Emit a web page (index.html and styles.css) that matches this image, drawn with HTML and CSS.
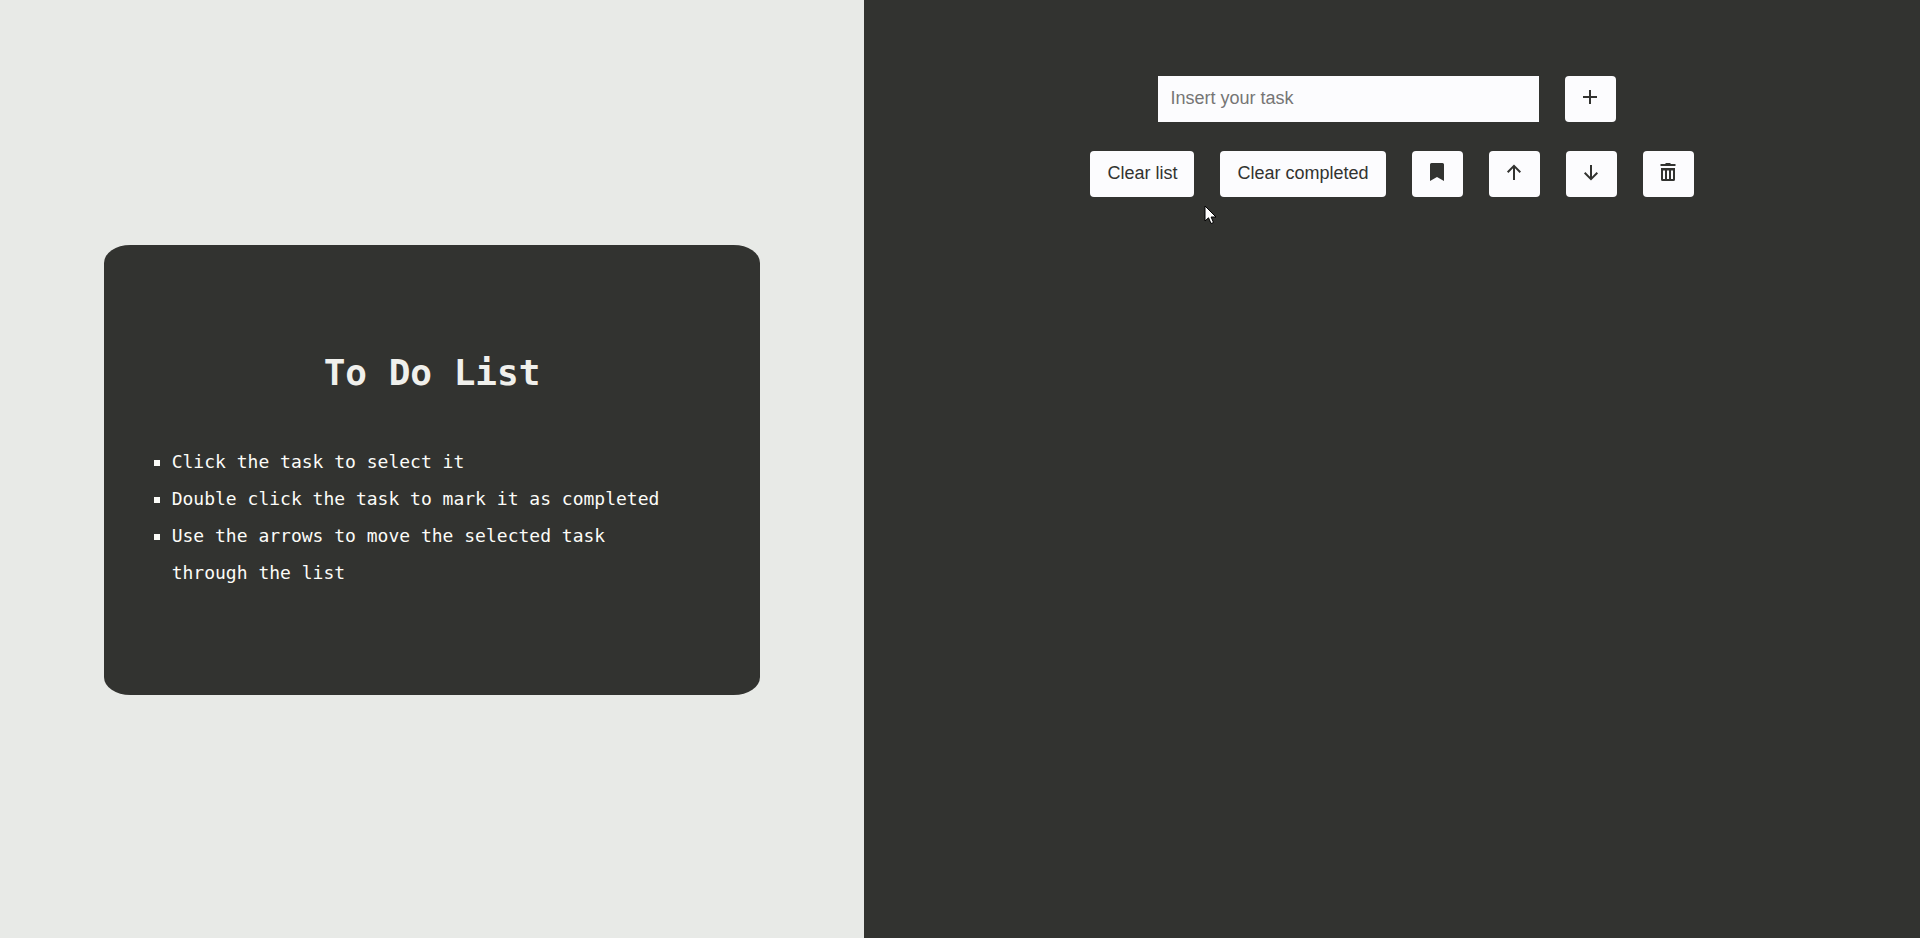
FILE: index.html
```html
<!DOCTYPE html>
<html lang="en">
<head>
<meta charset="utf-8">
<title>To Do List</title>
<link rel="stylesheet" href="styles.css">
</head>
<body>
<div class="page">
  <section class="intro">
    <div class="card">
      <h1 class="card-title">To Do List</h1>
      <ul class="tips">
        <li>Click the task to select it</li>
        <li>Double click the task to mark it as completed</li>
        <li>Use the arrows to move the selected task through the list</li>
      </ul>
    </div>
  </section>
  <main class="tasks">
    <form class="add-row">
      <input class="task-input" type="text" placeholder="Insert your task" aria-label="Insert your task">
      <button class="btn btn-icon btn-add" type="button" aria-label="Add task">
        <svg class="icon" viewBox="0 0 20 20"><path d="M10 3v14M3 10h14" fill="none" stroke="currentColor" stroke-width="2"/></svg>
      </button>
    </form>
    <div class="action-row">
      <button class="btn" type="button">Clear list</button>
      <button class="btn" type="button">Clear completed</button>
      <button class="btn btn-icon" type="button" aria-label="Save list">
        <svg class="icon" viewBox="0 0 20 20"><path d="M3 2.500Q3 1 4.500 1h11Q17 1 17 2.500V19l-7-4-7 4z" fill="currentColor"/></svg>
      </button>
      <button class="btn btn-icon" type="button" aria-label="Move up">
        <svg class="icon" viewBox="0 0 20 20"><path d="M10 18V4M3.700 10.200 10 3.900l6.300 6.300" fill="none" stroke="currentColor" stroke-width="2"/></svg>
      </button>
      <button class="btn btn-icon" type="button" aria-label="Move down">
        <svg class="icon" viewBox="0 0 20 20"><path d="M10 3v14M3.700 10.800 10 17.100l6.300-6.300" fill="none" stroke="currentColor" stroke-width="2"/></svg>
      </button>
      <button class="btn btn-icon" type="button" aria-label="Delete task">
        <svg class="icon" viewBox="0 0 20 20"><path d="M2.500 2H7L8 1h4l1 1h4.500v2h-15z" fill="currentColor"/><path fill-rule="evenodd" d="M3 6h14v11.500q0 1.500-1.500 1.500h-11Q3 19 3 17.500zM5 8.500V17h2V8.500zM9 8.500V17h2V8.500zM13 8.500V17h2V8.500z" fill="currentColor"/></svg>
      </button>
    </div>
  </main>
  <svg class="cursor" viewBox="0 0 13 20" aria-hidden="true"><path d="M1 1v15l3.500-3.200L7 18.500l2.500-1-2.400-5.500H12z" fill="#fff" stroke="#000"/></svg>
</div>
</body>
</html>
```
FILE: styles.css
```css
* {
  box-sizing: border-box;
}

body {
  margin: 0;
  background: #323330;
}

.page {
  position: relative;
  display: grid;
  grid-template-columns: 45% 55%;
  min-height: 100vh;
}

.intro {
  display: grid;
  place-items: center;
  padding-top: 2px;
  background: #e8eae7;
}

.card {
  display: flex;
  flex-direction: column;
  justify-content: center;
  gap: 46px;
  width: 76%;
  min-height: 48vh;
  padding: 24px 68px;
  border-radius: 4%;
  background: #323330;
  color: #fcfcf8;
  font-family: Consolas, "DejaVu Sans Mono", monospace;
}

.card-title {
  margin: 0;
  color: #f0f0ec;
  font-size: 36px;
  line-height: 48px;
  text-align: center;
}

.tips {
  margin: 0;
  padding: 0 16px 0 0;
  list-style: square;
  font-size: 18px;
  line-height: 37px;
}

.tasks {
  display: flex;
  flex-direction: column;
  align-items: center;
  gap: 29px;
  padding-top: 76px;
  font-family: Arial, "Liberation Sans", sans-serif;
}

.add-row,
.action-row {
  display: flex;
  gap: 26px;
}

.add-row {
  justify-content: center;
  width: 100%;
}

.task-input {
  width: 36%;
  height: 46px;
  padding: 0 12px 2px;
  border: 0;
  background: #fcfcfe;
  color: #323330;
  font: inherit;
  font-size: 18px;
}

.task-input::placeholder {
  color: #757575;
}

.btn {
  height: 46px;
  padding: 0 17px 2px;
  border: 0;
  border-radius: 4px;
  background: #fcfcfe;
  color: #323330;
  font: inherit;
  font-size: 18px;
}

.btn-icon {
  display: grid;
  place-items: center;
  width: 51px;
  padding: 0 0 5px;
}

.btn-add {
  margin-right: 10px;
}

.icon {
  width: 20px;
  height: 20px;
}

.cursor {
  position: absolute;
  top: 205px;
  left: 1204px;
  width: 13px;
  height: 20px;
}
```
